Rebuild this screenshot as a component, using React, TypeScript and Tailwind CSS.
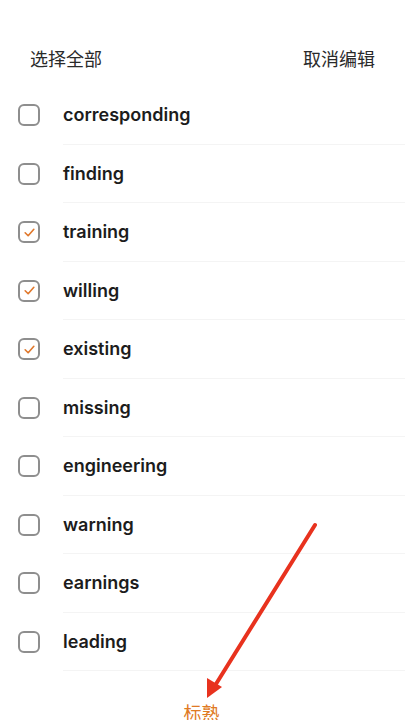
const words: { text: string; checked: boolean }[] = [
  { text: "corresponding", checked: false },
  { text: "finding", checked: false },
  { text: "training", checked: true },
  { text: "willing", checked: true },
  { text: "existing", checked: true },
  { text: "missing", checked: false },
  { text: "engineering", checked: false },
  { text: "warning", checked: false },
  { text: "earnings", checked: false },
  { text: "leading", checked: false },
];

const cjk = { fontFamily: '"Noto Sans CJK SC", "Noto Sans", sans-serif' };

function CheckBox({ checked }: { checked: boolean }) {
  return (
    <div className="w-[22px] h-[22px] rounded-[6px] border-2 border-[#8e8e8e] flex items-center justify-center shrink-0">
      {checked && (
        <svg className="w-[13px] h-[13px]" viewBox="0 0 24 24" fill="none">
          <path
            d="M4 12.5l5.5 5.5L20 6"
            stroke="#e0782c"
            strokeWidth={3}
            strokeLinecap="round"
            strokeLinejoin="round"
          />
        </svg>
      )}
    </div>
  );
}

export default function App() {
  return (
    <div className="relative w-[405px] h-[720px] overflow-hidden bg-white">
      <div
        className="flex justify-between items-center px-[30px] pt-[46px] h-[86px] items-start text-[18px] leading-[24px] text-[#2a2a2a]"
        style={cjk}
      >
        <span>选择全部</span>
        <span>取消编辑</span>
      </div>

      <div className="flex flex-col">
        {words.map((w) => (
          <div key={w.text} className="flex items-center h-[58.5px] relative">
            <div className="pl-[18px] pr-[23px]">
              <CheckBox checked={w.checked} />
            </div>
            <div className="flex-1 h-full flex items-center border-b border-[#f4f4f4]">
              <span
                className="text-[18px] font-semibold text-[#1c1c1c]"
                style={{ fontFamily: "Inter, sans-serif" }}
              >
                {w.text}
              </span>
            </div>
          </div>
        ))}
      </div>

      <div className="flex justify-center pt-[29px] pr-[2px]">
        <span className="text-[18px] leading-[24px] text-[#e07a24]" style={cjk}>
          标熟
        </span>
      </div>

      <svg className="absolute left-0 top-0 pointer-events-none" width="405" height="720">
        <line x1="315" y1="525" x2="216" y2="684" stroke="#e8321e" strokeWidth="4" strokeLinecap="round" />
        <polygon points="207,698 207,678 222,687" fill="#e8321e" />
      </svg>
    </div>
  );
}
